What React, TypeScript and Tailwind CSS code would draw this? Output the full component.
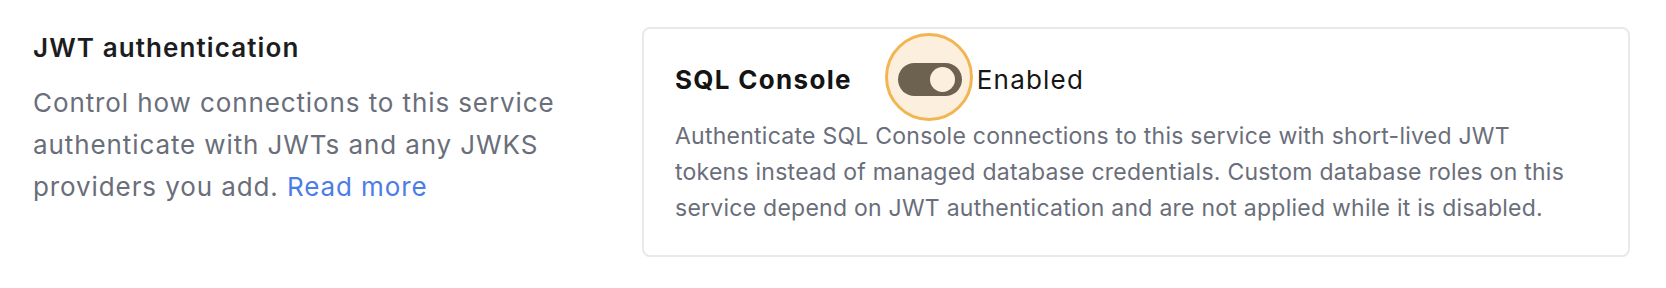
export default function App() {
  return (
    <div className="w-[1666px] h-[288px] bg-white flex px-[33px] pt-[27px] font-['Inter',sans-serif]">
      {/* Left: section description */}
      <div className="w-[609px] shrink-0 pt-[5px]">
        <h2 className="text-[26px] leading-[32px] tracking-[1.1px] font-semibold text-[#1d1d1f]">JWT authentication</h2>
        <p className="mt-[18px] w-[580px] text-[26px] leading-[42px] tracking-[0.9px] text-[#696e7a]">
          Control how connections to this service authenticate with JWTs and any JWKS providers you add.{" "}
          <a className="text-[#4a7de8]">Read more</a>
        </p>
      </div>

      {/* Right: SQL Console card */}
      <div className="w-[988px] h-[230px] shrink-0 rounded-[8px] border-2 border-[#e9e9e9] pl-[31px] pt-[30px]">
        <div className="flex items-center h-[40px]">
          <span className="text-[26px] tracking-[1.3px] font-bold text-[#141414]">SQL Console</span>
          <div className="relative ml-[46px] w-[64px] h-[33px]">
            {/* focus halo */}
            <div className="absolute left-[-13px] top-[-30px] w-[88px] h-[88px] rounded-full bg-[#fcefde] border-[3.5px] border-[#f2b552]" />
            <div className="relative w-[64px] h-[33px] rounded-full bg-[#6d6250] flex items-center justify-end pr-[7px]">
              <div className="w-[25px] h-[25px] rounded-full bg-[#fcefde]" />
            </div>
          </div>
          <span className="ml-[15px] text-[26px] tracking-[1.2px] text-[#161616]">Enabled</span>
        </div>
        <p className="mt-[19px] w-[930px] text-[23px] leading-[36px] tracking-[0.25px] text-[#6a6e7a]">
          Authenticate SQL Console connections to this service with short-lived JWT
          <br />
          tokens instead of managed database credentials. Custom database roles on this service depend on JWT
          authentication and are not applied while it is disabled.
        </p>
      </div>
    </div>
  );
}
